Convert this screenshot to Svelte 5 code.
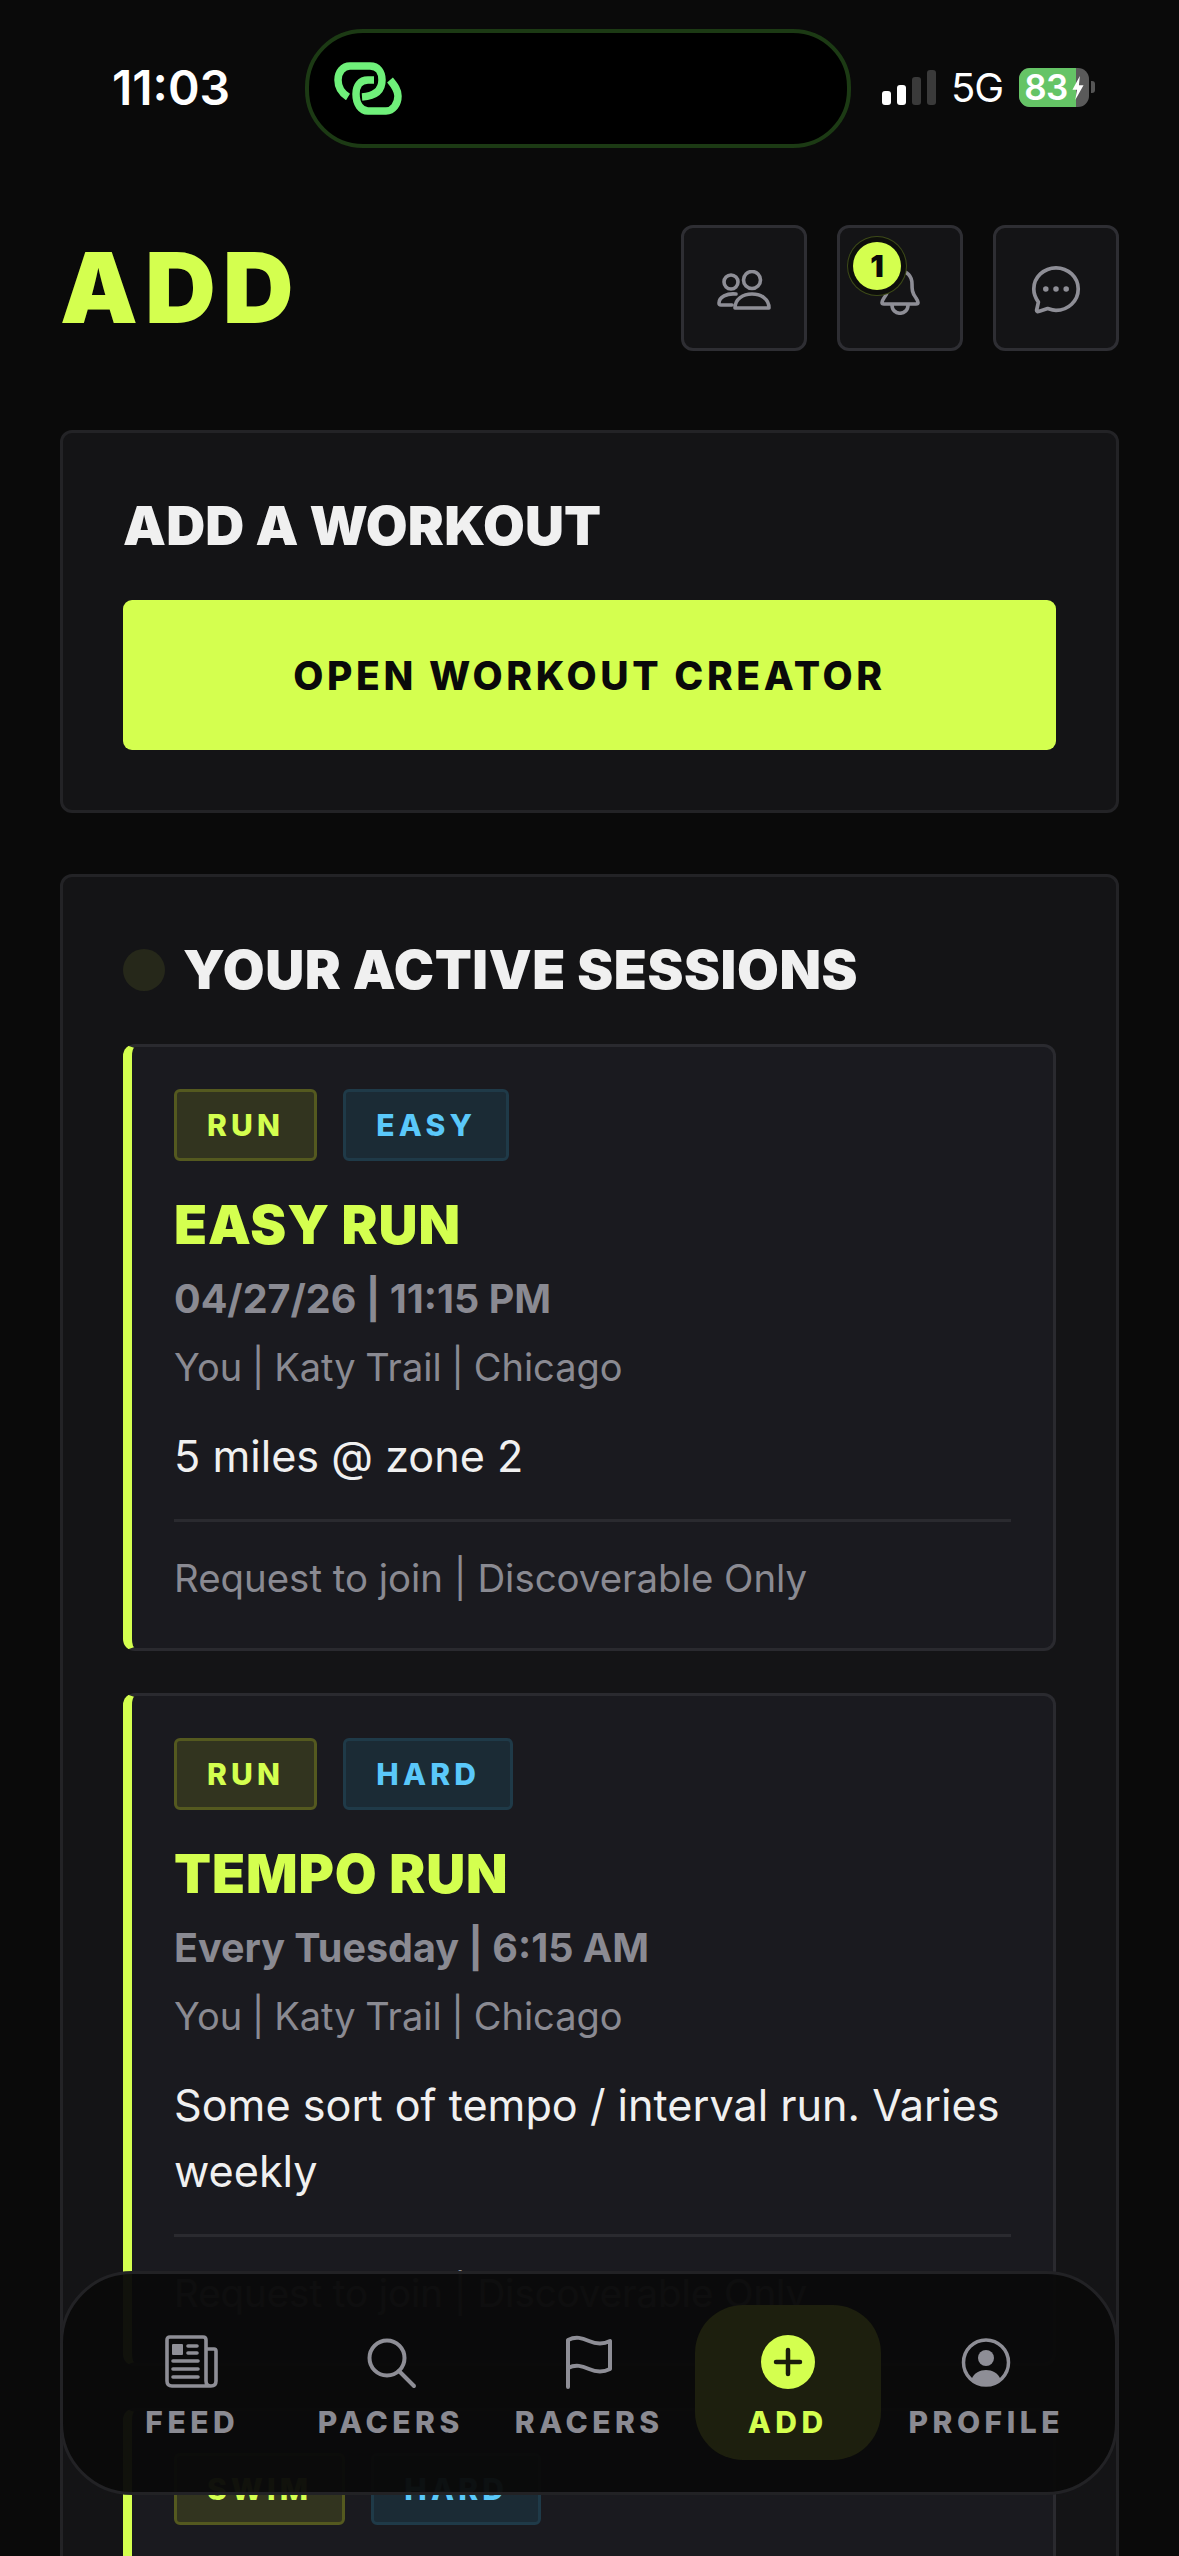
<script>
  const sessions = [
    { tags: ['RUN', 'EASY'], title: 'EASY RUN', date: '04/27/26 | 11:15 PM', desc: '5 miles @ zone 2' },
    { tags: ['RUN', 'HARD'], title: 'TEMPO RUN', date: 'Every Tuesday | 6:15 AM', desc: 'Some sort of tempo / interval run. Varies weekly' },
    { tags: ['SWIM', 'HARD'], title: 'LAP SWIM', date: 'Every Thursday | 6:00 AM', desc: 'Laps' }
  ];
</script>

<div class="screen">
  <div class="status">
    <span class="time">11:03</span>
    <div class="island">
      <svg class="logo" viewBox="0 0 68 53" fill="none" stroke="#6ff07a" stroke-width="7.5">
        <path d="M14 35 C6 30 4 24 4 18 C4 10 9 4 16 4 H36 C44 4 48 10 48 18 C48 28 42 34 28 35" />
        <path d="M40 18 H34 C26 18 22 24 22 32 C22 42 27 49 34 49 H52 C59 49 64 42 64 34 C64 28 61 24 56 18" />
      </svg>
    </div>
    <div class="indicators">
      <div class="signal"><i class="on s1"></i><i class="on s2"></i><i class="s3"></i><i class="s4"></i></div>
      <span class="net">5G</span>
      <div class="battery"><div class="fill"></div><span>83</span>
        <svg class="bolt" viewBox="0 0 14 26"><path d="M9 0 L1 15 H6 L4 26 L13 10 H8 Z" fill="#fff"/></svg>
      </div>
      <div class="nub"></div>
    </div>
  </div>

  <header class="top">
    <h1>ADD</h1>
    <div class="actions">
      <div class="iconbtn">
        <svg class="ico" viewBox="0 0 54 40" width="54" height="40" fill="none" stroke="#8e8e96" stroke-width="3.6" stroke-linejoin="round" stroke-linecap="round">
          <circle cx="14" cy="12" r="7"/><circle cx="35" cy="10" r="8.5"/>
          <path d="M19 24 C10 23 2 27 2 33 Q2 35 4 35 H15"/>
          <path d="M18 38 C18 29 26 24 35 24 C44 24 52 29 52 38 Z"/>
        </svg>
      </div>
      <div class="iconbtn">
        <svg class="ico bell" viewBox="0 0 44 46" width="44" height="46" fill="none" stroke="#8e8e96" stroke-width="3.6" stroke-linejoin="round" stroke-linecap="round">
          <path d="M6 29 C10 24 10 20 10 15 C10 7 15 2 22 2 C29 2 34 7 34 15 C34 20 34 24 38 29 Q42 35 38 35 H6 Q2 35 6 29 Z"/>
          <path d="M14 36 C14 47 30 47 30 36"/>
        </svg>
        <span class="badge">1</span>
      </div>
      <div class="iconbtn">
        <svg class="ico" viewBox="0 0 54 54" width="50" height="50" fill="none" stroke="#8e8e96" stroke-width="4" stroke-linejoin="round" stroke-linecap="round">
          <path d="M27 3 C14 3 3 13 3 26 C3 32 5 36 8 40 L6 49 Q6 51 9 50 L18 47 C21 48 24 49 27 49 C40 49 51 39 51 26 C51 13 40 3 27 3 Z"/>
          <circle cx="16" cy="26" r="3" fill="#8e8e96" stroke="none"/><circle cx="27" cy="26" r="3" fill="#8e8e96" stroke="none"/><circle cx="38" cy="26" r="3" fill="#8e8e96" stroke="none"/>
        </svg>
      </div>
    </div>
  </header>

  <section class="panel first">
    <h2 class="tight">ADD A WORKOUT</h2>
    <div class="cta">OPEN WORKOUT CREATOR</div>
  </section>

  <section class="panel">
    <div class="heading"><span class="dot"></span><h2>YOUR ACTIVE SESSIONS</h2></div>
    <div class="list">
      {#each sessions as s}
        <article class="session">
          <div class="tags">
            <span class="tag lime">{s.tags[0]}</span>
            <span class="tag blue">{s.tags[1]}</span>
          </div>
          <h3>{s.title}</h3>
          <div class="date">{s.date}</div>
          <div class="loc">You | Katy Trail | Chicago</div>
          <p class="desc">{s.desc}</p>
          <div class="foot">Request to join | Discoverable Only</div>
        </article>
      {/each}
    </div>
  </section>

  <nav class="nav">
    <div class="item">
      <svg viewBox="0 0 54 54" width="54" height="54" fill="none" stroke="#8e8e96" stroke-width="3.6" stroke-linejoin="round" stroke-linecap="round">
        <path d="M41 14 H49 Q51 14 51 16 V46 Q51 51 46 51 H7 Q2 51 2 46 V5 Q2 2 5 2 H38 Q41 2 41 5 V46 Q41 51 46 51"/>
        <rect x="7" y="9" width="11" height="11" rx="1" fill="#8e8e96" stroke="none"/>
        <path d="M23 11 H32 M23 18 H32 M8 26 H33 M8 34 H33 M8 42 H33"/>
      </svg>
      <span>FEED</span>
    </div>
    <div class="item">
      <svg viewBox="0 0 54 54" width="54" height="54" fill="none" stroke="#8e8e96" stroke-width="4" stroke-linecap="round">
        <circle cx="23" cy="23" r="17.5"/><path d="M35 36 L50 51"/>
      </svg>
      <span>PACERS</span>
    </div>
    <div class="item">
      <svg viewBox="0 0 54 54" width="54" height="54" fill="none" stroke="#8e8e96" stroke-width="4" stroke-linecap="round" stroke-linejoin="round">
        <path d="M6 52 V5 C14 1 20 3 27 6 C34 9 42 9 48 6 V34 C42 37 34 37 27 34 C20 31 14 29 6 33"/>
      </svg>
      <span>RACERS</span>
    </div>
    <div class="item active">
      <div class="pill"></div>
      <svg viewBox="0 0 54 54" width="54" height="54">
        <circle cx="27" cy="27" r="27" fill="#d4ff4f"/>
        <path d="M27 15 V39 M15 27 H39" stroke="#1a1c0c" stroke-width="4.5" stroke-linecap="round"/>
      </svg>
      <span>ADD</span>
    </div>
    <div class="item">
      <svg viewBox="0 0 54 54" width="54" height="54" fill="none">
        <circle cx="27" cy="27.5" r="22.5" stroke="#8e8e96" stroke-width="3.5"/>
        <circle cx="27" cy="23" r="8" fill="#8e8e96"/>
        <path d="M12.5 44 C15 38 21 35 27 35 C33 35 39 38 41.5 44 C38 48 33 50 27 50 C21 50 16 48 12.5 44 Z" fill="#8e8e96"/>
      </svg>
      <span>PROFILE</span>
    </div>
  </nav>
</div>

<style>
  :global(body) { margin: 0; background: #0a0a0a; }
  .screen {
    position: relative;
    width: 1179px;
    height: 2556px;
    overflow: hidden;
    background: #0a0a0a;
    font-family: Inter, "Liberation Sans", sans-serif;
    color: #f0f0f0;
    box-sizing: border-box;
    padding: 29px 60px 0;
  }
  .screen * { box-sizing: border-box; }
  .status { height: 119px; display: flex; align-items: center; position: relative; }
  .time { width: 245px; padding-left: 52px; font-size: 48px; font-weight: 600; color: #fff; margin-top: -3px; }
  .island {
    width: 546px; height: 119px; background: #000; border: 4px solid #1c3a14; border-radius: 58px;
    display: flex; align-items: center; padding-left: 25px;
  }
  .logo { width: 68px; height: 53px; }
  .indicators { display: flex; align-items: center; margin-left: 31px; margin-top: -3px; }
  .signal { display: flex; align-items: flex-end; gap: 6px; height: 36px; }
  .signal i { display: block; width: 9px; border-radius: 3px; background: #3a3a3a; }
  .signal .on { background: #fff; }
  .s1 { height: 14px; } .s2 { height: 20px; } .s3 { height: 28px; } .s4 { height: 35px; }
  .net { font-size: 40px; font-weight: 400; margin-left: 15px; letter-spacing: -1px; color: #fff; }
  .battery {
    position: relative; width: 70px; height: 39px; margin-left: 16px; border-radius: 11px; overflow: hidden;
    background: #5a5a5a; display: flex; align-items: center;
  }
  .fill { position: absolute; inset: 0 13px 0 0; background: #65c466; }
  .battery span { position: relative; font-size: 35px; font-weight: 600; color: #fff; padding-left: 5px; letter-spacing: -0.5px; }
  .bolt { position: absolute; right: 4px; top: 8px; width: 14px; height: 24px; }
  .nub { width: 4px; height: 12px; background: #555; margin-left: 2px; border-radius: 0 3px 3px 0; }

  .top { margin-top: 77px; height: 126px; display: flex; justify-content: space-between; align-items: center; }
  h1 { margin: 0; font-size: 98px; font-weight: 900; color: #d4ff4f; letter-spacing: 7px; line-height: 1; }
  .actions { display: flex; gap: 30px; }
  .iconbtn {
    position: relative; width: 126px; height: 126px; background: #141416; border: 3px solid #2e2e33; border-radius: 12px;
    display: flex; align-items: center; justify-content: center;
  }
  .ico { margin-top: 3px; }
  .bell { margin-top: 8px; }
  .badge {
    position: absolute; top: 14px; left: 13px; width: 48px; height: 48px; border-radius: 50%;
    background: #d4ff4f; color: #0a0a0a; font-size: 30px; font-weight: 900; display: flex; align-items: center; justify-content: center;
    box-shadow: 0 0 0 5px #0d0e0b, 0 0 0 6px #3d4a18;
  }

  .panel { background: #141416; border: 3px solid #232326; border-radius: 12px; padding: 60px; margin-top: 61px; }
  .first { margin-top: 79px; }
  h2 { margin: 0; font-size: 54px; font-weight: 900; line-height: 65px; color: #f0f0f0; letter-spacing: 0.6px; }
  .tight { letter-spacing: 0.2px; }
  .cta {
    margin-top: 42px; height: 150px; background: #d4ff4f; color: #0a0a0a; border-radius: 9px;
    display: flex; align-items: center; justify-content: center;
    font-size: 39px; font-weight: 800; letter-spacing: 3.6px;
  }
  .heading { display: flex; align-items: center; gap: 18px; }
  .dot { width: 42px; height: 42px; border-radius: 50%; background: #26281a; }
  .list { margin-top: 42px; display: flex; flex-direction: column; gap: 42px; }
  .session {
    background: #1a1a1f; border: 3px solid #2a2a2f; border-left: 9px solid #d4ff4f; border-radius: 12px;
    padding: 42px 42px 46px 42px;
  }
  .tags { display: flex; gap: 26px; }
  .tag { height: 72px; padding: 0 30px; border-radius: 6px; font-size: 30px; font-weight: 800; letter-spacing: 4.2px; display: flex; align-items: center; }
  .lime { background: #32341f; border: 3px solid #54591f; color: #d4ff4f; }
  .blue { background: #1b2b35; border: 3px solid #1f3a48; color: #5ac8fa; }
  h3 { margin: 31px 0 0; font-size: 54px; font-weight: 900; line-height: 65px; color: #d4ff4f; letter-spacing: 0.9px; }
  .date { margin-top: 17px; font-size: 39.5px; font-weight: 700; line-height: 50px; color: #8a8a92; }
  .loc { margin-top: 20px; font-size: 38px; line-height: 47px; color: #8a8a92; word-spacing: -1px; }
  .desc { margin: 32px 0 0; font-size: 43.2px; line-height: 66px; color: #f0f0f0; }
  .foot { margin-top: 30px; border-top: 3px solid #2a2a2f; padding-top: 33px; font-size: 38.4px; line-height: 47px; color: #8a8a92; }

  .nav {
    position: absolute; left: 60px; top: 2271px; width: 1058px; height: 224px;
    background: rgba(10,10,10,.97); border: 3px solid #222225; border-radius: 72px;
    display: grid; grid-template-columns: repeat(5, 198.5px); padding: 0 30px;
  }
  .item { position: relative; display: flex; flex-direction: column; align-items: center; padding-top: 61px; }
  .item svg { position: relative; }
  .item span { position: relative; margin-top: 15px; font-size: 30px; font-weight: 800; letter-spacing: 4.5px; color: #8a8a92; line-height: 36px; }
  .active span { color: #d4ff4f; }
  .pill { position: absolute; left: 6px; right: 6px; top: 31px; height: 155px; background: #1d1f0e; border-radius: 48px; }
</style>
